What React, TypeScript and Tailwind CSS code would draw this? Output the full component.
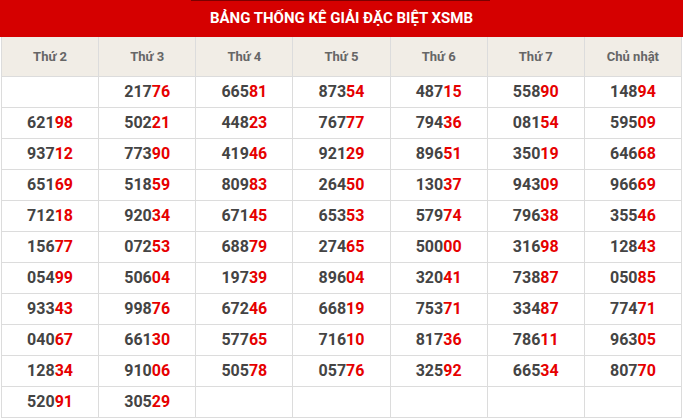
import React from "react";

const days = ["Thứ 2", "Thứ 3", "Thứ 4", "Thứ 5", "Thứ 6", "Thứ 7", "Chủ nhật"];

const rows: string[][] = [
  ["", "21776", "66581", "87354", "48715", "55890", "14894"],
  ["62198", "50221", "44823", "76777", "79436", "08154", "59509"],
  ["93712", "77390", "41946", "92129", "89651", "35019", "64668"],
  ["65169", "51859", "80983", "26450", "13037", "94309", "96669"],
  ["71218", "92034", "67145", "65353", "57974", "79638", "35546"],
  ["15677", "07253", "68879", "27465", "50000", "31698", "12843"],
  ["05499", "50604", "19739", "89604", "32041", "73887", "05085"],
  ["93343", "99876", "67246", "66819", "75371", "33487", "77471"],
  ["04067", "66130", "57765", "71610", "81736", "78611", "96305"],
  ["12834", "91006", "50578", "05776", "32592", "66534", "80770"],
  ["52091", "30529", "", "", "", "", ""],
];

export default function App() {
  return (
    <div className="w-[683px] h-[419px] bg-white overflow-hidden" style={{ fontFamily: "Roboto, 'Noto Sans', sans-serif" }}>
      <div className="relative h-[37px] bg-[#d50000] flex items-center justify-center">
        <div className="absolute top-0 left-[191px] w-[299px] h-[1px] bg-[#7a0000]" />
        <span className="text-white font-bold text-[15px] tracking-[0px]">BẢNG THỐNG KÊ GIẢI ĐẶC BIỆT XSMB</span>
      </div>
      <div className="ml-[1px] w-[681px] border-l border-[#dcdcdc]">
        <div className="grid grid-cols-7 h-[40px] bg-[#f1ede6]">
          {days.map((d) => (
            <div key={d} className="flex items-center justify-center border-r border-b border-[#dcdcdc] text-[13px] font-bold text-[#666]">
              {d}
            </div>
          ))}
        </div>
        {rows.map((r, i) => (
          <div key={i} className="grid grid-cols-7 h-[31px]">
            {r.map((n, j) => (
              <div key={j} className="flex items-center justify-center border-r border-b border-[#dcdcdc] text-[16px] font-bold">
                <span className="text-[#444]">{n.slice(0, 3)}</span>
                <span className="text-[#e60000]">{n.slice(3)}</span>
              </div>
            ))}
          </div>
        ))}
      </div>
    </div>
  );
}
